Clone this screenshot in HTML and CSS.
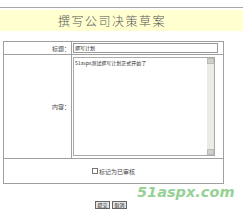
FILE: index.html
```html
<!DOCTYPE html>
<html>
<head>
<meta charset="utf-8">
<link rel="stylesheet" href="styles.css">
</head>
<body>
<div class="page">
  <div class="topline"></div>
  <div class="banner"><span class="title">撰写公司决策草案</span></div>
  <table class="form">
    <tr class="row-title">
      <td class="label">标题：</td>
      <td class="value"><div class="input">撰写计划</div></td>
    </tr>
    <tr class="row-content">
      <td class="label">内容：</td>
      <td class="value">
        <div class="area">
          <div class="area-text">51aspx测试撰写计划正式开始了</div>
          <div class="scroll"><span class="arrow"></span><span class="track"></span><span class="arrow"></span></div>
        </div>
      </td>
    </tr>
    <tr class="row-check">
      <td colspan="2" class="check-cell"><span class="box"></span><span class="check-label">标记为已审核</span></td>
    </tr>
  </table>
  <div class="buttons"><span class="btn">提交</span><span class="btn">取消</span></div>
  <div class="watermark">51aspx.com</div>
</div>
</body>
</html>
```
FILE: styles.css
```css
html, body { margin: 0; padding: 0; background: #fff; }
body { font-family: "Noto Sans CJK SC", "DejaVu Sans", sans-serif; color: #333; }
.page { position: relative; width: 247px; height: 222px; overflow: hidden; }
.topline { margin-top: 7px; width: 243px; height: 1px; background: #a8a8a8; }
.banner { margin-top: 2px; width: 243px; height: 21px; background: #ffffd0; display: flex; align-items: center; justify-content: center; padding-right: 19px; box-sizing: border-box; }
.title { font-size: 12px; letter-spacing: 1.5px; color: #555; line-height: 1; font-weight: 300; }
.form { margin: 10px 0 0 3px; width: 221px; border-collapse: collapse; border: 1px solid #9a9a9a; }
.form td { border: 1px solid #a0a0a0; padding: 0; font-size: 6px; }
.label { width: 66px; text-align: right; padding-right: 1px !important; color: #444; }
.row-title td { height: 12px; }
.row-content td { height: 103px; }
.row-check td { height: 24px; }
.value { padding-left: 1px !important; }
.input { width: 142px; height: 8px; border: 1px solid #999; font-size: 5px; line-height: 8px; padding-left: 1px; color: #222; }
.area { width: 140px; height: 97px; border: 1px solid #aaa; display: flex; }
.area-text { flex: 1; font-size: 5px; padding: 1px 1px; line-height: 7px; color: #333; }
.scroll { width: 7px; display: flex; flex-direction: column; background: #ecece4; }
.arrow { height: 6px; background: #d4d0c8; border: 1px solid #bbb; box-sizing: border-box; }
.track { flex: 1; }
.check-cell { text-align: center; }
.box { display: inline-block; width: 4px; height: 4px; border: 1px solid #777; vertical-align: middle; margin-right: 1px; }
.check-label { font-size: 6px; vertical-align: middle; color: #444; }
.buttons { display: flex; gap: 2px; margin: 17px 0 0 95px; }
.btn { width: 15px; height: 8px; border: 1px solid #666; background: #e4e4e4; box-sizing: border-box; font-size: 5px; line-height: 6px; text-align: center; color: #222; }
.watermark { position: absolute; left: 137px; top: 184px; font-family: "DejaVu Sans", sans-serif; font-weight: bold; font-style: italic; font-size: 14.5px; color: #7cc67c; opacity: 0.8; }
```
